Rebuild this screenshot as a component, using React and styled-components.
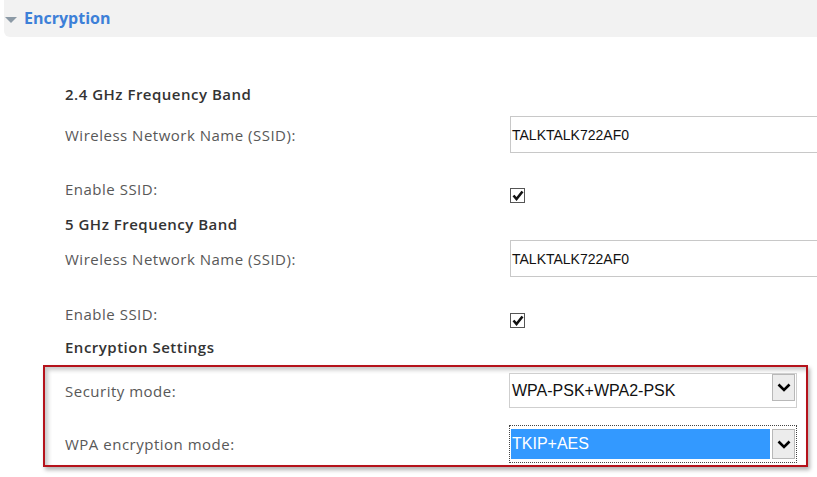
import React from 'react'
import styled, { createGlobalStyle } from 'styled-components'

const GlobalStyle = createGlobalStyle`
  html, body {
    margin: 0;
    padding: 0;
    background: #fff;
    overflow: hidden;
  }
  body {
    font-family: "Open Sans", "Liberation Sans", Arial, sans-serif;
  }
`

const Page = styled.div`
  width: 817px;
  height: 477px;
  overflow: hidden;
`

const Header = styled.div`
  margin-left: 4px;
  height: 37px;
  background: #f2f2f2;
  border-bottom-left-radius: 6px;
  display: flex;
  align-items: center;
  gap: 7px;
  padding-left: 1px;
  padding-bottom: 2px;
  box-sizing: border-box;
`

const Caret = styled.span`
  width: 0;
  height: 0;
  border-left: 6px solid transparent;
  border-right: 6px solid transparent;
  border-top: 6px solid #8c9aa6;
  margin-top: 5px;
`

const HeaderTitle = styled.span`
  color: #3d80d8;
  font-weight: 700;
  font-size: 16px;
`

const Body = styled.div`
  padding-left: 65px;
`

const Heading = styled.div`
  margin-top: ${p => p.$top}px;
  line-height: 20px;
  font-size: 15px;
  font-weight: 600;
  color: #333;
  letter-spacing: 0.5px;
`

const Row = styled.div`
  display: flex;
  align-items: ${p => (p.$top ? 'flex-start' : 'center')};
  margin-top: ${p => p.$mt || 0}px;
`

const Label = styled.div`
  width: 444px;
  flex-shrink: 0;
  line-height: 20px;
  font-size: 15px;
  letter-spacing: 0.5px;
  color: #585858;
`

const TextInput = styled.div`
  height: 37px;
  width: 330px;
  margin-left: 1px;
  box-sizing: border-box;
  border: 1px solid #c8c8c8;
  border-right: none;
  display: flex;
  align-items: center;
  padding-left: 1px;
  font-family: "Liberation Sans", Arial, sans-serif;
  font-size: 14px;
  color: #111;
`

const Check = styled.div`
  margin-top: 9px;
  margin-left: 1px;
  width: 15px;
  height: 15px;
  box-sizing: border-box;
  border: 1px solid #555;
  background: #fff;
  display: flex;
  align-items: center;
  justify-content: center;
`

const Highlight = styled.div`
  margin-top: 8px;
  margin-left: 43px;
  width: 765px;
  box-sizing: border-box;
  border: 2px solid #b5121b;
  padding: 6px 0 2px 20px;
  box-shadow: inset 3px 3px 4px rgba(0, 0, 0, 0.22), 2px 3px 4px rgba(0, 0, 0, 0.3);
`

const Select = styled.div`
  width: 288px;
  height: ${p => (p.$focused ? 38 : 35)}px;
  box-sizing: border-box;
  border: ${p => (p.$focused ? '1px dotted #444' : '1px solid #cfcfcf')};
  display: flex;
  align-items: center;
  padding: ${p => (p.$focused ? '3px 1px 3px 1px' : '0 1px 0 1px')};
  gap: 2px;
  background: #fff;
`

const SelectValue = styled.div`
  flex: 1;
  align-self: stretch;
  display: flex;
  align-items: center;
  padding-left: 1px;
  font-family: "Liberation Sans", Arial, sans-serif;
  font-size: 16px;
  color: ${p => (p.$selected ? '#fff' : '#111')};
  background: ${p => (p.$selected ? '#3399ff' : 'transparent')};
`

const ArrowButton = styled.div`
  width: 23px;
  align-self: stretch;
  margin: ${p => (p.$focused ? '0' : '0 0 6px 0')};
  box-sizing: border-box;
  border: 1px solid #b8b8b8;
  background: #ececec;
  display: flex;
  align-items: center;
  justify-content: center;
`

const Chevron = () => (
  <svg width="14" height="9" viewBox="0 0 14 9">
    <polyline points="1.5,1.5 7,7 12.5,1.5" fill="none" stroke="#000" strokeWidth="2.6" />
  </svg>
)

const Tick = () => (
  <svg width="12" height="11" viewBox="0 0 12 11">
    <polyline points="1.5,5.5 4.5,9 10.5,1.5" fill="none" stroke="#111" strokeWidth="2.6" />
  </svg>
)

function Dropdown({ value, focused }) {
  return (
    <Select $focused={focused}>
      <SelectValue $selected={focused}>{value}</SelectValue>
      <ArrowButton $focused={focused}>
        <Chevron />
      </ArrowButton>
    </Select>
  )
}

export default function App() {
  return (
    <Page>
      <GlobalStyle />
      <Header>
        <Caret />
        <HeaderTitle>Encryption</HeaderTitle>
      </Header>
      <Body>
        <Heading $top={47}>2.4 GHz Frequency Band</Heading>
        <Row $mt={12}>
          <Label>Wireless Network Name (SSID):</Label>
          <TextInput>TALKTALK722AF0</TextInput>
        </Row>
        <Row $mt={26} $top>
          <Label>Enable SSID:</Label>
          <Check><Tick /></Check>
        </Row>
        <Heading $top={11}>5 GHz Frequency Band</Heading>
        <Row $mt={6}>
          <Label>Wireless Network Name (SSID):</Label>
          <TextInput>TALKTALK722AF0</TextInput>
        </Row>
        <Row $mt={27} $top>
          <Label>Enable SSID:</Label>
          <Check><Tick /></Check>
        </Row>
        <Heading $top={9}>Encryption Settings</Heading>
      </Body>
      <Highlight>
        <Row>
          <Label>Security mode:</Label>
          <Dropdown value="WPA-PSK+WPA2-PSK" />
        </Row>
        <Row $mt={17}>
          <Label>WPA encryption mode:</Label>
          <Dropdown value="TKIP+AES" focused />
        </Row>
      </Highlight>
    </Page>
  )
}
